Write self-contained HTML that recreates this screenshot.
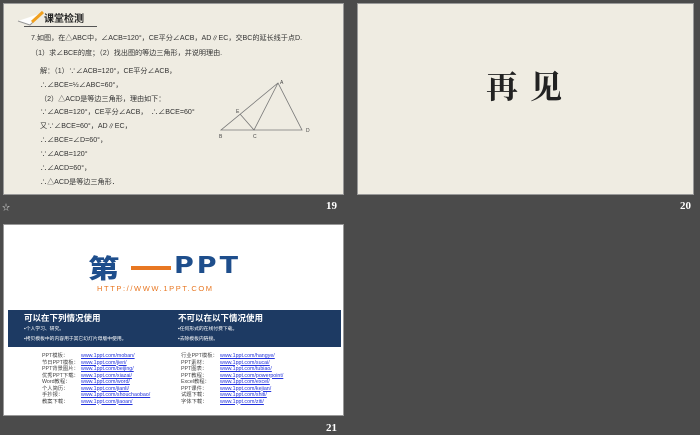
<!DOCTYPE html>
<html><head><meta charset="utf-8"><style>
*{margin:0;padding:0;box-sizing:border-box}
body{width:700px;height:435px;background:#4b4b4b;position:relative;overflow:hidden;font-family:"Liberation Sans","Noto Sans CJK SC",sans-serif}
.s{position:absolute;background:#efece2;border:1px solid #999}
.n{position:absolute;color:#fff;font-weight:bold;font-size:11px;font-family:"Liberation Serif",serif}
.t{position:absolute;font-size:7.1px;color:#333;white-space:nowrap}
.l{position:absolute;font-size:5.3px;white-space:nowrap;color:#444}
.l u{color:#2233dd}
</style></head><body>
<div class="s" style="left:3px;top:3px;width:341px;height:192px">
 <svg style="position:absolute;left:12px;top:5px" width="30" height="18"><path d="M2 12 L14 16 L26 4" stroke="#999" fill="#fff" stroke-width="1"/><path d="M16 13 L27 3" stroke="#f0a020" stroke-width="3"/></svg>
 <div style="position:absolute;left:40px;top:6px;font-size:10px;font-weight:bold;color:#222">课堂检测</div>
 <div style="position:absolute;left:20px;top:22px;width:73px;height:1px;background:#555"></div>
 <div class="t" style="left:27px;top:29px">7.如图，在△ABC中，∠ACB=120°，CE平分∠ACB，AD∥EC，交BC的延长线于点D.</div>
 <div class="t" style="left:27px;top:44px">（1）求∠BCE的度；（2）找出图的等边三角形，并说明理由.</div>
 <div class="t" style="left:36px;top:62px">解：（1）∵∠ACB=120°，CE平分∠ACB，</div>
 <div class="t" style="left:36px;top:76px">∴∠BCE=½∠ABC=60°，</div>
 <div class="t" style="left:36px;top:90px">（2）△ACD是等边三角形，理由如下：</div>
 <div class="t" style="left:36px;top:103px">∵∠ACB=120°，CE平分∠ACB，　∴∠BCE=60°</div>
 <div class="t" style="left:36px;top:117px">又∵∠BCE=60°，AD∥EC，</div>
 <div class="t" style="left:36px;top:131px">∴∠BCE=∠D=60°，</div>
 <div class="t" style="left:36px;top:145px">∵∠ACB=120°</div>
 <div class="t" style="left:36px;top:159px">∴∠ACD=60°，</div>
 <div class="t" style="left:36px;top:173px">∴△ACD是等边三角形．</div>
</div>
<svg style="position:absolute;left:0;top:0" width="350" height="200"><g stroke="#777" fill="none" stroke-width="0.8"><path d="M221 130 L302 130 L278 83 Z M278 83 L254 130 L240 114"/></g>
<g font-size="5" fill="#444" font-family="Liberation Sans"><text x="219" y="138">B</text><text x="253" y="138">C</text><text x="306" y="132">D</text><text x="280" y="84">A</text><text x="236" y="113">E</text></g></svg>
<div class="n" style="left:326px;top:200px">19</div>
<div style="position:absolute;left:2px;top:202px;color:#ddd;font-size:8px">☆</div>
<div class="s" style="left:357px;top:3px;width:337px;height:192px">
 <div style="position:absolute;left:128px;top:58px;font-size:32px;font-weight:bold;color:#222;font-family:'Noto Serif CJK SC',serif;letter-spacing:12px">再见</div>
</div>
<div class="n" style="left:680px;top:200px">20</div>
<div class="s" style="left:3px;top:224px;width:341px;height:192px;background:#fff">
 <div style="position:absolute;left:84px;top:30px;font-size:26px;font-weight:900;color:#1e4e8c;line-height:26px;font-family:'Noto Sans CJK SC',sans-serif;transform:scaleX(1.2);transform-origin:left">第</div>
 <div style="position:absolute;left:127px;top:41px;width:40px;height:4px;background:#e87722"></div>
 <div style="position:absolute;left:170px;top:30px;font-size:27px;font-weight:bold;color:#1e4e8c;line-height:26px;font-family:'DejaVu Sans',sans-serif;letter-spacing:3px;transform:scaleY(0.85);transform-origin:top">PPT</div>
 <div style="position:absolute;left:93px;top:59px;font-size:7.5px;color:#e87722;letter-spacing:1.6px">HTTP://WWW.1PPT.COM</div>
 <div style="position:absolute;left:4px;top:85px;width:333px;height:37px;background:#1d3a63;color:#fff">
  <div style="position:absolute;left:16px;top:2px;font-size:8.5px;font-weight:bold">可以在下列情况使用</div>
  <div style="position:absolute;left:170px;top:2px;font-size:8.5px;font-weight:bold">不可以在以下情况使用</div>
  <div style="position:absolute;left:16px;top:15px;font-size:4.8px">▪个人学习、研究。</div>
  <div style="position:absolute;left:16px;top:25px;font-size:4.8px">▪拷贝模板中的内容用于其它幻灯片母版中使用。</div>
  <div style="position:absolute;left:170px;top:15px;font-size:4.8px">▪任何形式的在线付费下载。</div>
  <div style="position:absolute;left:170px;top:25px;font-size:4.8px">▪去除模板内链接。</div>
 </div>
 <div class="l" style="left:38px;top:128px;line-height:6.5px">PPT模板：<br>节日PPT模板：<br>PPT背景图片：<br>优秀PPT下载：<br>Word教程：<br>个人简历：<br>手抄报：<br>教案下载：</div>
 <div class="l" style="left:77px;top:128px;line-height:6.5px"><u>www.1ppt.com/moban/</u><br><u>www.1ppt.com/jieri/</u><br><u>www.1ppt.com/beijing/</u><br><u>www.1ppt.com/xiazai/</u><br><u>www.1ppt.com/word/</u><br><u>www.1ppt.com/jianli/</u><br><u>www.1ppt.com/shouchaobao/</u><br><u>www.1ppt.com/jiaoan/</u></div>
 <div class="l" style="left:177px;top:128px;line-height:6.5px">行业PPT模板：<br>PPT素材：<br>PPT图表：<br>PPT教程：<br>Excel教程：<br>PPT课件：<br>试题下载：<br>字体下载：</div>
 <div class="l" style="left:216px;top:128px;line-height:6.5px"><u>www.1ppt.com/hangye/</u><br><u>www.1ppt.com/sucai/</u><br><u>www.1ppt.com/tubiao/</u><br><u>www.1ppt.com/powerpoint/</u><br><u>www.1ppt.com/excel/</u><br><u>www.1ppt.com/kejian/</u><br><u>www.1ppt.com/shiti/</u><br><u>www.1ppt.com/ziti/</u></div>
</div>
<div class="n" style="left:326px;top:422px">21</div>
</body></html>
